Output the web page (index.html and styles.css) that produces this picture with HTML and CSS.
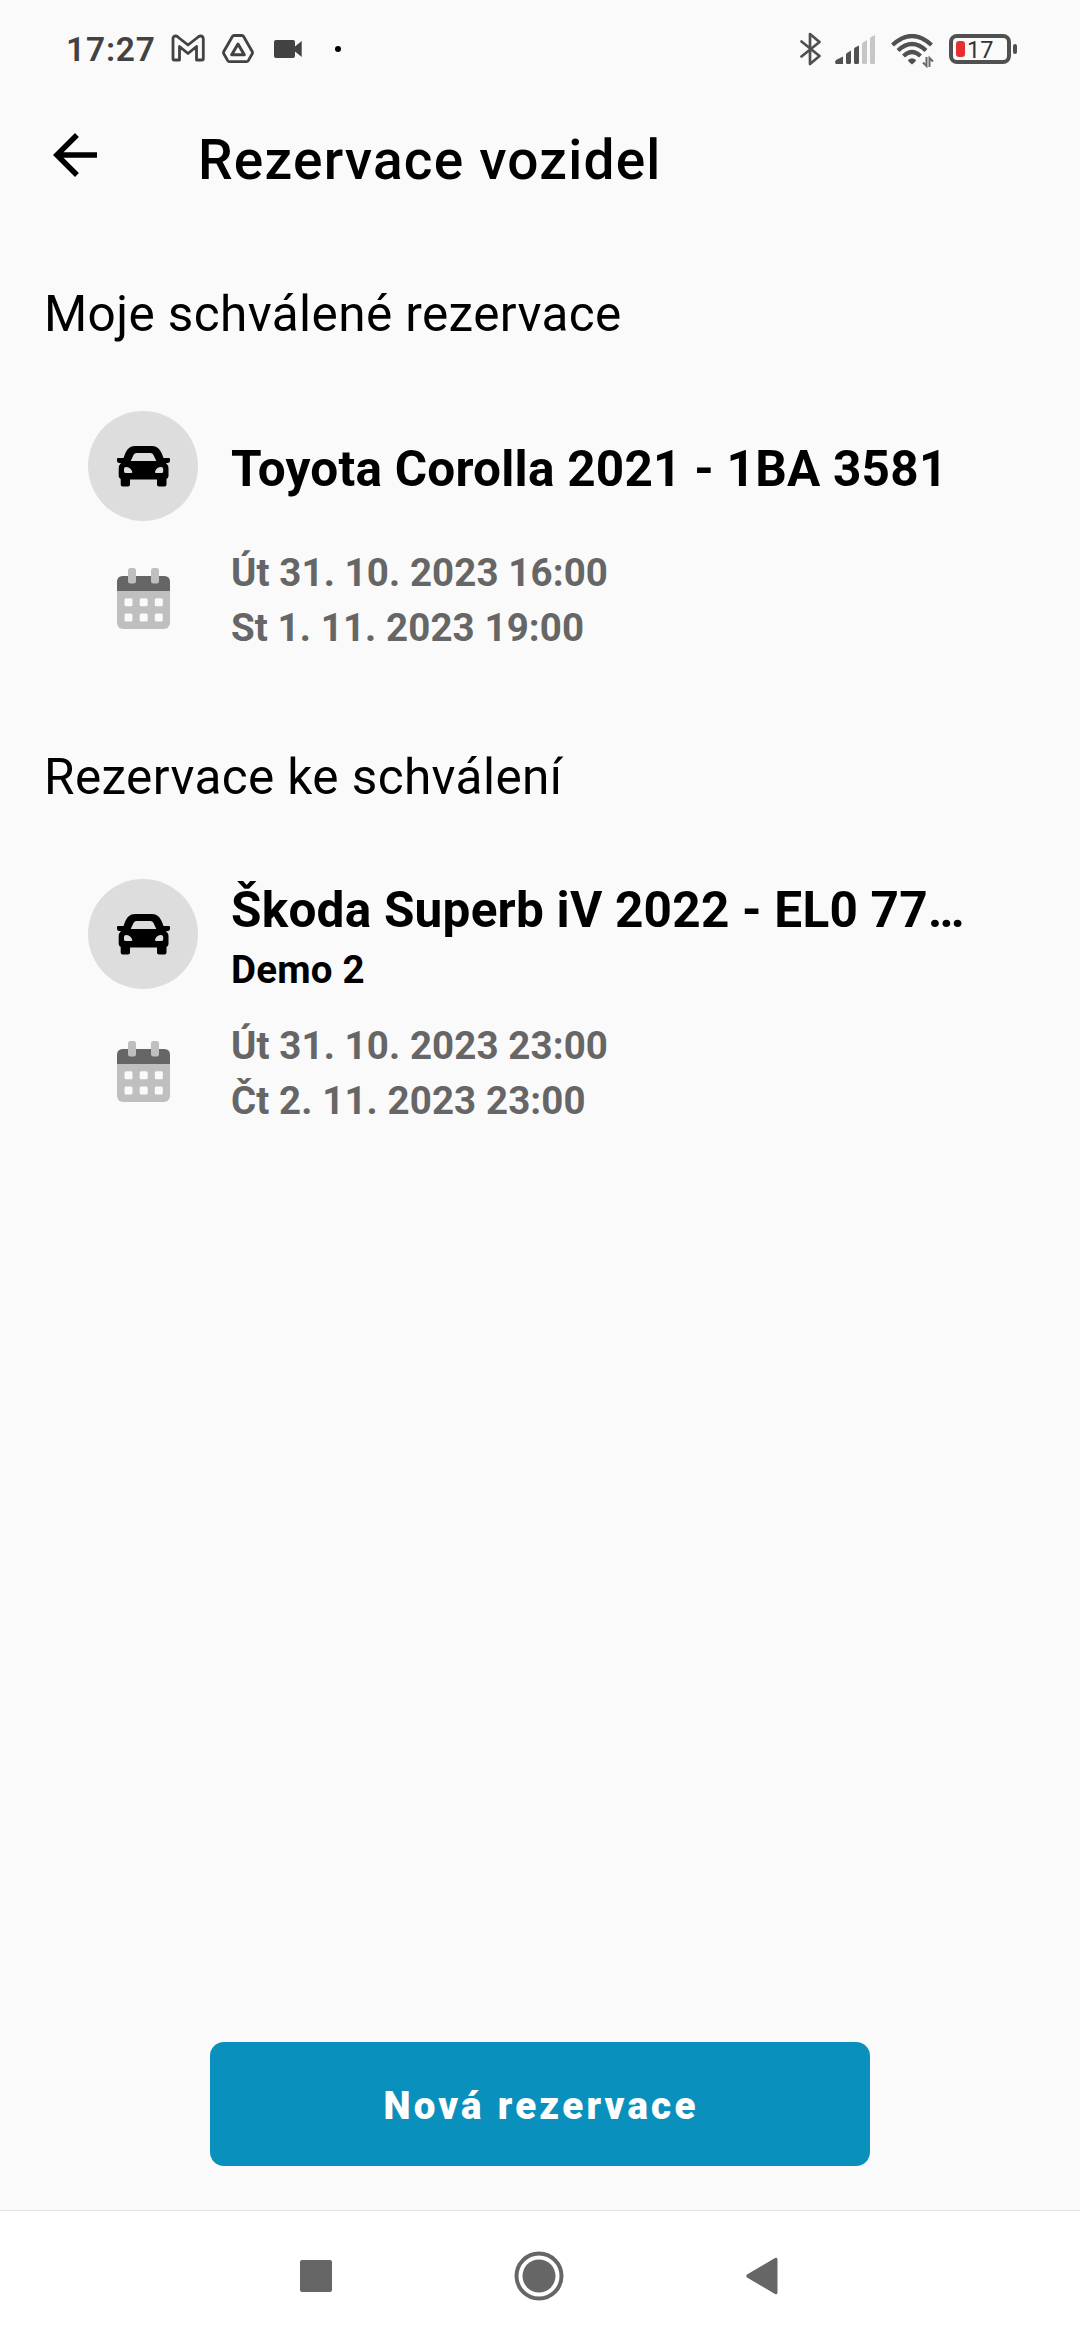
FILE: index.html
```html
<!DOCTYPE html>
<html lang="cs">
<head>
  <meta charset="UTF-8" />
  <meta name="viewport" content="width=device-width, initial-scale=1.0"/>
  <title>Rezervace vozidel</title>
  <link rel="stylesheet" href="styles.css">
</head>
<body>
<svg class="sprite" aria-hidden="true">
  <symbol id="car" viewBox="0 0 53 41">
    <path fill-rule="evenodd" d="M18 0H35C40 0 43 3 45 8L46.500 12H52Q53 12 53 13V15Q53 17 50.500 17H49Q51.500 19 51.500 23V30Q51.500 32 49.500 33V38.500Q49.500 40.500 47.500 40.500H42Q40 40.500 40 38.500V33.500H13V38.500Q13 40.500 11 40.500H5.700Q3.700 40.500 3.700 38.500V33Q1.700 32 1.700 30V23Q1.700 19 4 17H2.500Q0 17 0 15V13Q0 12 1 12H6.500L8 8C10 3 13 0 18 0ZM19.500 7Q17.500 7 16.500 9L13.700 15H39.300L36.500 9Q35.500 7 33.500 7ZM7 23V25.500Q7 27 9 27H14.500Q16 27 15 25Q13 21 9 21Q7 21 7 23ZM46.200 23Q46.200 21 44 21Q40 21 38.200 25Q37.400 27 39 27H44.200Q46.200 27 46.200 25.500Z"/>
  </symbol>
  <symbol id="calendar" viewBox="0 0 53 61">
    <rect y="8" width="53" height="53" rx="6" fill="#bfbfbf"/>
    <path d="M0 23V14Q0 8 6 8H47Q53 8 53 14V23Z" fill="#666"/>
    <rect x="11" width="8" height="15.500" rx="2.500" fill="#bfbfbf"/>
    <rect x="34" width="8" height="15.500" rx="2.500" fill="#bfbfbf"/>
    <g fill="#fafafa">
      <rect x="7.500" y="30.300" width="8" height="8" rx="1.500"/>
      <rect x="22.700" y="30.300" width="8" height="8" rx="1.500"/>
      <rect x="37.800" y="30.300" width="8" height="8" rx="1.500"/>
      <rect x="7.500" y="45.500" width="8" height="8" rx="1.500"/>
      <rect x="22.700" y="45.500" width="8" height="8" rx="1.500"/>
      <rect x="37.800" y="45.500" width="8" height="8" rx="1.500"/>
    </g>
  </symbol>
</svg>

<div class="status-bar">
  <div class="status-left">
    <span class="clock">17:27</span>
    <svg class="gmail" width="34" height="28" viewBox="0 0 34 28">
      <path d="M2 5.500Q1.500 2 5 2Q6 2 7.500 3.500L17 11L26.500 3.500Q28 2 29.500 2Q32.500 2 32.300 5.500V24.500Q32.300 26 31 26H25.500V12.500L17 19.500L8.500 12.500V26H3.300Q2 26 2 24.500Z" fill="none" stroke="#424242" stroke-width="2.800" stroke-linejoin="round"/>
    </svg>
    <svg class="drive" width="32" height="30" viewBox="0 0 32 30">
      <path d="M12 1.500H20Q21 1.500 21.600 2.500L30.200 17.500Q30.800 18.700 30.200 19.700L26.300 26.600Q25.700 27.600 24.700 27.600H7.300Q6.300 27.600 5.700 26.600L1.800 19.700Q1.200 18.700 1.800 17.500L10.400 2.500Q11 1.500 12 1.500Z" fill="none" stroke="#424242" stroke-width="2.800"/>
      <path d="M16 10L22.300 20.800H9.700Z" fill="none" stroke="#424242" stroke-width="3" stroke-linejoin="round"/>
    </svg>
    <svg class="camera" width="28" height="18" viewBox="0 0 28 18">
      <path d="M2 0H19Q21 0 21 2V6.500L27.700 1V17L21 11.500V16Q21 18 19 18H2Q0 18 0 16V2Q0 0 2 0Z" fill="#424242"/>
    </svg>
    <span class="dot"></span>
  </div>
  <div class="status-right">
    <svg class="bluetooth" width="22" height="34" viewBox="0 0 22 34">
      <path d="M1.500 9.500L19.500 24L10 32V2L19.500 10L1.500 24.500" fill="none" stroke="#505050" stroke-width="2.700" stroke-linejoin="round" stroke-linecap="round"/>
    </svg>
    <svg class="signal" width="41" height="29" viewBox="0 0 41 29">
      <g fill="#505050">
        <path d="M0 27Q0 25.500 2 24.500L8 21.500V29H1.500Q0 29 0 27Z"/>
        <path d="M11 19.500Q11 18.500 12 18L16 15.500V27.500Q16 29 14.500 29H12.500Q11 29 11 27.500Z"/>
        <path d="M19 14.500Q19 13 20 12.500L24 10.500V27.500Q24 29 22.500 29H20.500Q19 29 19 27.500Z"/>
      </g>
      <g fill="#c6c6c6">
        <path d="M27 9Q27 8 28 7.500L32 5V27.500Q32 29 30.500 29H28.500Q27 29 27 27.500Z"/>
        <path d="M35 3.500Q35 2.500 36 2L40 0V27.500Q40 29 38.500 29H36.500Q35 29 35 27.500Z"/>
      </g>
    </svg>
    <svg class="wifi" width="44" height="34" viewBox="0 0 44 34">
      <g fill="none" stroke="#505050" stroke-width="4.200">
        <path d="M1.500 11Q21 -7 40.500 11"/>
        <path d="M7 16.500Q21 3.500 35 16.500"/>
        <path d="M12.500 22Q21 14 29.500 22"/>
      </g>
      <path d="M17 26Q21 22.500 25 26Q25 27.500 21 30.500Q17 27.500 17 26Z" fill="#505050"/>
      <path d="M35.500 23V32L32 28.500M38.500 33V24L42 27.500" fill="none" stroke="#6a6a6a" stroke-width="2"/>
    </svg>
    <div class="battery">
      <span class="battery-level"></span>
      <span class="battery-text">17</span>
    </div>
    <span class="battery-tip"></span>
  </div>
</div>

<header class="app-bar">
  <svg class="back" width="66" height="66" viewBox="0 0 24 24">
    <path d="M20 11H7.830l5.590-5.590L12 4l-8 8 8 8 1.410-1.410L7.830 13H20v-2z"/>
  </svg>
  <h1>Rezervace vozidel</h1>
</header>

<main>
  <section>
    <h2>Moje schválené rezervace</h2>
    <div class="vehicle">
      <div class="avatar"><svg width="53" height="41"><use href="#car"/></svg></div>
      <div class="vehicle-text">
        <div class="name">Toyota Corolla 2021 - 1BA 3581</div>
      </div>
    </div>
    <div class="dates">
      <svg class="calendar" width="53" height="61"><use href="#calendar"/></svg>
      <div>
        <div>Út 31. 10. 2023 16:00</div>
        <div>St 1. 11. 2023 19:00</div>
      </div>
    </div>
  </section>

  <section>
    <h2>Rezervace ke schválení</h2>
    <div class="vehicle">
      <div class="avatar"><svg width="53" height="41"><use href="#car"/></svg></div>
      <div class="vehicle-text">
        <div class="name">Škoda Superb iV 2022 - EL0 77…</div>
        <div class="owner">Demo 2</div>
      </div>
    </div>
    <div class="dates">
      <svg class="calendar" width="53" height="61"><use href="#calendar"/></svg>
      <div>
        <div>Út 31. 10. 2023 23:00</div>
        <div>Čt 2. 11. 2023 23:00</div>
      </div>
    </div>
  </section>
</main>

<footer>
  <button class="new-reservation">Nová rezervace</button>
</footer>

<nav class="nav-bar">
  <svg width="32" height="32" viewBox="0 0 32 32"><rect width="32" height="32" rx="2"/></svg>
  <svg width="50" height="50" viewBox="0 0 50 50">
    <circle cx="25" cy="25" r="22.500" fill="none" stroke="#666" stroke-width="4"/>
    <circle cx="25" cy="25" r="16.500"/>
  </svg>
  <svg width="32" height="38" viewBox="0 0 32 38"><path d="M1 17.500L29 1Q31.500 0 31.500 2.500V35.500Q31.500 38 29 37L1 20.500Q-.5 19 1 17.500Z"/></svg>
</nav>
</body>
</html>
```
FILE: styles.css
```css
* {
  box-sizing: border-box;
}

body {
  margin: 0;
  height: 2340px;
  display: flex;
  flex-direction: column;
  background-color: #fafafa;
  color: #000;
  font-family: Roboto, sans-serif;
}

svg {
  display: block;
  flex-shrink: 0;
}

.sprite {
  width: 0;
  height: 0;
  position: absolute;
}

/* status bar */
.status-bar {
  height: 88px;
  padding: 10px 63px 0 66px;
  display: flex;
  justify-content: space-between;
}

.status-left,
.status-right {
  display: flex;
  align-items: center;
  height: 78px;
}

.clock {
  width: 105px;
  font-size: 33.5px;
  font-weight: 600;
  letter-spacing: 0.8px;
  line-height: 40px;
  padding-top: 2px;
  color: #424242;
}

.gmail {
  margin-top: -3px;
}

.drive {
  margin-left: 17px;
}

.camera {
  margin-left: 20px;
}

.dot {
  width: 6px;
  height: 6px;
  margin-left: 33px;
  border-radius: 50%;
  background-color: #000;
}

.signal {
  margin-left: 13px;
}

.wifi {
  margin-left: 15px;
  margin-top: 3px;
}

.battery {
  width: 62px;
  height: 30px;
  margin-left: 14px;
  padding-left: 3px;
  border: 4px solid #505050;
  border-radius: 8px;
  display: flex;
  align-items: center;
}

.battery-level {
  width: 9px;
  height: 16px;
  border-radius: 3px;
  background-color: #e53030;
}

.battery-text {
  margin-left: 2px;
  font-size: 23.5px;
  line-height: 22px;
  padding-top: 2px;
  color: #333;
}

.battery-tip {
  width: 4px;
  height: 10px;
  margin-left: 2px;
  border-radius: 2px;
  background-color: #505050;
}

/* app bar */
.app-bar {
  height: 144px;
  padding-left: 42px;
  display: flex;
  align-items: center;
}

.back {
  margin-top: -10px;
}

h1 {
  margin: 0 0 0 90px;
  font-size: 55px;
  font-weight: 500;
  line-height: 64px;
  letter-spacing: 1.22px;
}

/* reservations */
main {
  flex: 1;
  padding-top: 53px;
}

section {
  margin-bottom: 93.5px;
}

h2 {
  margin: 0 0 68px 44px;
  font-size: 49.5px;
  font-weight: 400;
  line-height: 58px;
  letter-spacing: 0.4px;
}

.vehicle {
  display: flex;
  align-items: center;
  gap: 33px;
  padding-left: 88px;
}

.avatar {
  width: 110px;
  height: 110px;
  border-radius: 50%;
  background-color: #ddd;
  display: flex;
  align-items: center;
  justify-content: center;
}

.avatar svg {
  margin-top: 1px;
}

.vehicle-text {
  padding: 7px 0 1px;
  font-weight: 700;
}

.name {
  font-size: 49.5px;
  line-height: 58px;
  letter-spacing: 0.23px;
  white-space: nowrap;
}

.owner {
  margin: 8px 0 1px;
  font-size: 38.5px;
  line-height: 45px;
  letter-spacing: 0.2px;
}

.dates {
  margin-top: 23.5px;
  padding-left: 117px;
  display: flex;
  align-items: center;
  gap: 61px;
  font-size: 38.5px;
  font-weight: 700;
  line-height: 55px;
  letter-spacing: 0.1px;
  color: #666;
}

.calendar {
  margin-top: -2px;
}

/* bottom button */
footer {
  padding-bottom: 44px;
  display: flex;
  justify-content: center;
}

.new-reservation {
  width: 660px;
  height: 124px;
  padding: 2px 0 0 2px;
  border: none;
  border-radius: 14px;
  background-color: #0a90bc;
  color: #fff;
  font-family: inherit;
  font-size: 38.5px;
  font-weight: 900;
  letter-spacing: 3.25px;
}

/* system navigation */
.nav-bar {
  height: 130px;
  padding-left: 300px;
  border-top: 1px solid #e3e3e3;
  background-color: #fff;
  display: flex;
  align-items: center;
  gap: 182px;
  fill: #666;
}
```
